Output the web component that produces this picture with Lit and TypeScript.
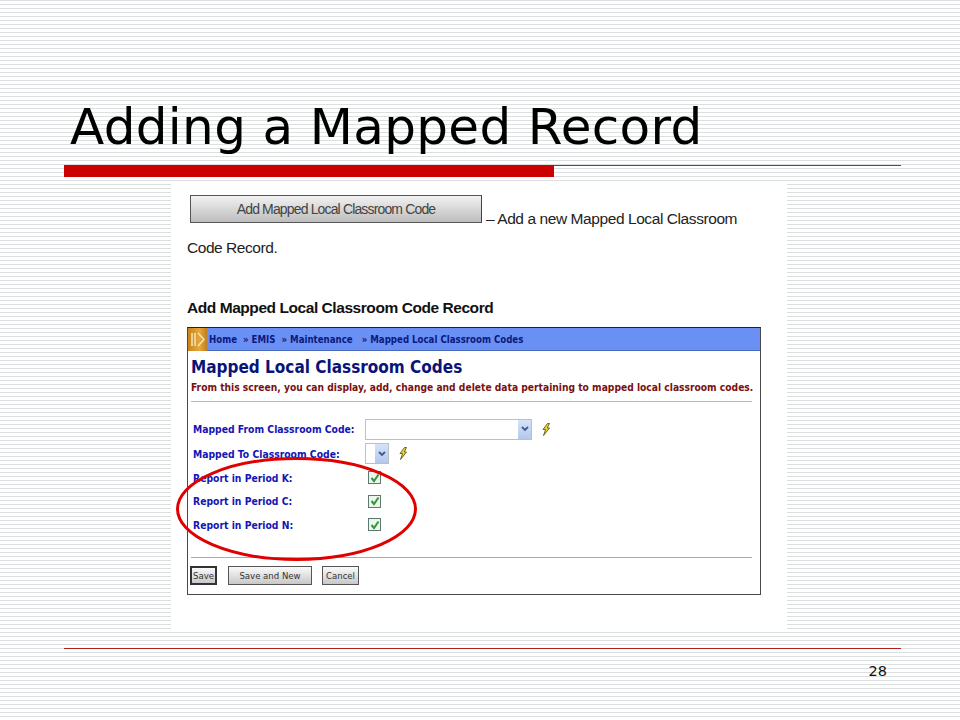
import { LitElement, html, css } from "lit";
import { customElement } from "lit/decorators.js";

const bolt = html`<svg class="bolt" width="10" height="13" viewBox="0 0 10 13"><path d="M6.500 .5 2 6.500h2.600L2.500 12.500 8.500 5H6.200L8.500 .5Z" fill="#efd93a" stroke="#6e6420" stroke-width="1"/></svg>`;
const chev = html`<span class="arrow"><svg width="8" height="6" viewBox="0 0 8 6"><path d="M1 1l3 3 3-3" fill="none" stroke="#3f5a8e" stroke-width="1.800"/></svg></span>`;
const check = html`<span class="check"><svg width="10" height="10" viewBox="0 0 10 10"><path d="M1.500 5l2.500 3 4.500-6.500" fill="none" stroke="#2f9a35" stroke-width="2"/></svg></span>`;

@customElement("app-root")
export class AppRoot extends LitElement {
  static styles = css`
    :host {
      display: block;
      width: 960px;
      height: 720px;
      position: relative;
      overflow: hidden;
      background: repeating-linear-gradient(to bottom, #dcdfdf 0 1px, #ffffff 1px 4px);
      font-family: "DejaVu Sans", Verdana, sans-serif;
    }
    .slide { display: flex; flex-direction: column; height: 720px; }
    h1 {
      margin: 0;
      padding: 95px 0 0 70px;
      height: 64px;
      font-size: 50px;
      line-height: 64px;
      font-weight: 400;
      color: #000;
      letter-spacing: 0.35px;
    }
    .rule { display: flex; margin: 6px 59px 0 64px; height: 12px; }
    .rule .thick { width: 490px; height: 12px; background: #cc0000; }
    .rule .thin { flex: 1; height: 1px; background: #c02020; }
    .panel {
      align-self: flex-start;
      margin: 6px 0 0 171px;
      width: 616px;
      height: 448px;
      background: #fff;
      padding: 12px 0 0 16px;
      box-sizing: border-box;
      font-family: "Liberation Sans", Arial, sans-serif;
      color: #222;
    }
    .line1 { display: flex; align-items: flex-start; height: 43px; }
    .bigbtn {
      width: 292px;
      height: 28px;
      margin-left: 3px;
      box-sizing: border-box;
      border: 1px solid #555;
      border-right-color: #444;
      background: linear-gradient(#f2f2f2, #bdbdbd);
      color: #444;
      font-size: 14px;
      line-height: 27px;
      text-align: center;
      letter-spacing: -0.85px;
    }
    .desc { font-size: 15.500px; margin: 14px 0 0 4px; line-height: 20px; letter-spacing: -0.42px; white-space: nowrap; }
    .code { font-size: 15.500px; line-height: 20px; letter-spacing: -0.45px; }
    h2 { margin: 40px 0 0; font-size: 15.500px; line-height: 20px; color: #111; letter-spacing: -0.44px; font-weight: 700; }
    .app {
      margin-top: 9px;
      width: 574px;
      height: 268px;
      box-sizing: border-box;
      border: 1px solid #4a4a4a;
      border-top-color: #222;
      background: #fff;
      font-family: "DejaVu Sans Condensed", "DejaVu Sans", sans-serif;
      font-stretch: condensed;
      font-weight: 700;
    }
    .crumb { display: flex; align-items: center; height: 23px; background: #6a90f4; border-bottom: 1px solid #4b6bc0; color: #0a1a80; font-size: 9.600px; box-sizing: border-box; }
    .logo { width: 19px; height: 23px; background: linear-gradient(90deg, #c8841c, #e8a838 60%, #c08020); margin-right: 2px; display: flex; align-items: center; justify-content: center; }
    .crumb span { white-space: pre; }
    .body { padding: 5px 0 0 3px; }
    .title { font-size: 17px; line-height: 22px; color: #0a1478; }
    .sub { font-size: 10.200px; line-height: 14px; color: #7a1010; margin-top: 3px; white-space: nowrap; }
    .hr { height: 1px; background: #b4b8b8; margin: 6px 8px 0 0; }
    .row { display: flex; align-items: center; font-size: 10.300px; color: #1414b4; }
    .row label { width: 172px; margin-left: 2px; white-space: nowrap; }
    .rows { margin-top: 15px; height: 140px; }
    .r1 { height: 24px; } .r2 { height: 25px; } .r3 { height: 23.500px; }
    .sel { display: flex; justify-content: flex-end; height: 21px; box-sizing: border-box; border: 1px solid #b8c0c8; background: #fff; }
    .sel.wide { width: 167px; }
    .sel.short { width: 24px; }
    .arrow { width: 13px; height: 19px; background: linear-gradient(#d6e2f8, #b4c8ec); display: flex; align-items: center; justify-content: center; }
    .bolt { margin-left: 9px; }
    .check { width: 11px; height: 11px; margin-left: 3px; border: 1px solid #5a7a70; background: #eef4ee; display: flex; align-items: center; justify-content: center; }
    .hr2 { height: 1px; background: #a8acac; margin: 0 8px 0 0; }
    .btns { display: flex; gap: 10px; margin: 8px 0 0 -1px; font-family: "DejaVu Sans Condensed", "DejaVu Sans", sans-serif; font-weight: 400; }
    .b { height: 19px; box-sizing: border-box; border: 1px solid #555; background: linear-gradient(#fafafa, #c8c8c8); color: #333; font-size: 9.500px; line-height: 17px; text-align: center; }
    .b.save { width: 27px; border: 2px solid #333; line-height: 15px; margin-right: 1px; }
    .b.san { width: 84px; }
    .b.cancel { width: 37px; }
    .footer { margin: 17px 59px 0 64px; height: 1px; background: #b02020; }
    .num { margin: 12px 73px 0 0; text-align: right; font-size: 14.500px; line-height: 20px; color: #111; }
    .ellipse { position: absolute; left: 175px; top: 455px; pointer-events: none; }
  `;

  render() {
    return html`
      <div class="slide">
        <h1>Adding a Mapped Record</h1>
        <div class="rule"><div class="thick"></div><div class="thin"></div></div>
        <div class="panel">
          <div class="line1">
            <div class="bigbtn">Add Mapped Local Classroom Code</div>
            <div class="desc">– Add a new Mapped Local Classroom</div>
          </div>
          <div class="code">Code Record.</div>
          <h2>Add Mapped Local Classroom Code Record</h2>
          <div class="app">
            <div class="crumb">
              <div class="logo"><svg width="15" height="15" viewBox="0 0 15 15"><path d="M2 1v13M5 1v13" stroke="#f8e4b8" stroke-width="1.500"/><path d="M8 1l6 6.500-6 6.500" fill="none" stroke="#f8e4b8" stroke-width="1.500"/></svg></div>
              <span>Home  » EMIS  » Maintenance   » Mapped Local Classroom Codes</span>
            </div>
            <div class="body">
              <div class="title">Mapped Local Classroom Codes</div>
              <div class="sub">From this screen, you can display, add, change and delete data pertaining to mapped local classroom codes.</div>
              <div class="hr"></div>
              <div class="rows">
                <div class="row r1"><label>Mapped From Classroom Code:</label><div class="sel wide">${chev}</div>${bolt}</div>
                <div class="row r2"><label>Mapped To Classroom Code:</label><div class="sel short">${chev}</div>${bolt}</div>
                <div class="row r3"><label>Report in Period K:</label>${check}</div>
                <div class="row r3"><label>Report in Period C:</label>${check}</div>
                <div class="row r3"><label>Report in Period N:</label>${check}</div>
              </div>
              <div class="hr2"></div>
              <div class="btns">
                <div class="b save">Save</div>
                <div class="b san">Save and New</div>
                <div class="b cancel">Cancel</div>
              </div>
            </div>
          </div>
        </div>
        <div class="footer"></div>
        <div class="num">28</div>
      </div>
      <svg class="ellipse" width="246" height="110" viewBox="0 0 246 110"><ellipse cx="121.500" cy="54" rx="119" ry="50.500" fill="none" stroke="#e00000" stroke-width="3"/></svg>
    `;
  }
}
